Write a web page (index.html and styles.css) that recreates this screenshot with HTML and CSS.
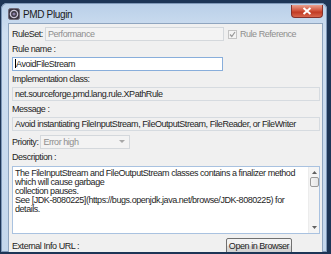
FILE: index.html
```html
<!DOCTYPE html>
<html lang="en">
<head>
    <meta charset="UTF-8">
    <title>PMD Plugin</title>
    <link rel="stylesheet" href="styles.css">
</head>
<body>
    <div class="window">
        <!-- Title Bar -->
        <div class="titlebar">
            <svg class="app-icon" width="12" height="12" viewBox="0 0 12 12">
                <rect x="0.5" y="0.5" width="11" height="11" rx="2" fill="#3a3440" stroke="#6f6a78"/>
                <circle cx="6" cy="6" r="3.6" fill="none" stroke="#c9c3d6" stroke-width="1.4"/>
                <circle cx="6" cy="6" r="1.6" fill="#8a7fa6"/>
            </svg>
            <span class="title">PMD Plugin</span>
            <div class="close-btn">
                <svg width="10" height="8" viewBox="0 0 10 8">
                    <path d="M1.5 1 L8.5 7 M8.5 1 L1.5 7" stroke="#fff" stroke-width="2"/>
                </svg>
            </div>
        </div>

        <!-- Dialog Body -->
        <div class="client">
            <div class="row">
                <span class="label">RuleSet:</span>
                <div class="field disabled ruleset">Performance</div>
                <span class="checkbox">
                    <svg width="9" height="9" viewBox="0 0 9 9">
                        <path d="M2 4.5 L3.8 6.5 L7 2" fill="none" stroke="#9a9a9a" stroke-width="1.2"/>
                    </svg>
                </span>
                <span class="label grey">Rule Reference</span>
            </div>

            <div class="label block">Rule name :</div>
            <div class="field focus name"><span class="caret"></span>AvoidFileStream</div>

            <div class="label block">Implementation class:</div>
            <div class="field readonly">net.sourceforge.pmd.lang.rule.XPathRule</div>

            <div class="label block">Message :</div>
            <div class="field readonly">Avoid instantiating FileInputStream, FileOutputStream, FileReader, or FileWriter</div>

            <div class="row priority">
                <span class="label">Priority:</span>
                <div class="field disabled combo">
                    <span>Error high</span>
                    <svg width="6" height="4" viewBox="0 0 6 4"><path d="M0 0 H6 L3 3 Z" fill="#a8a8a8"/></svg>
                </div>
            </div>

            <div class="label block">Description :</div>
            <div class="textarea">
                <div class="text">The FileInputStream and FileOutputStream classes contains a finalizer method<br>which will cause garbage<br>collection pauses.<br>See [JDK-8080225](https://bugs.openjdk.java.net/browse/JDK-8080225) for<br>details.</div>
                <div class="scrollbar">
                    <svg width="5" height="3" viewBox="0 0 5 3"><path d="M0 3 L2.5 0 L5 3 Z" fill="#606060"/></svg>
                    <div class="thumb"></div>
                    <div class="track"></div>
                    <svg width="5" height="3" viewBox="0 0 5 3"><path d="M0 0 L2.5 3 L5 0 Z" fill="#606060"/></svg>
                </div>
            </div>

            <div class="row bottom">
                <span class="label">External Info URL :</span>
                <button class="btn">Open in Browser</button>
            </div>
        </div>
    </div>
</body>
</html>
```

FILE: styles.css
```css
/* Page */
body {
    margin: 0;
    background: #1d3556;
    font-family: "Liberation Sans", Arial, sans-serif;
    font-size: 9px;
    letter-spacing: -0.45px;
    color: #1e1e1e;
    overflow: hidden;
    height: 254px;
}
/* Window Frame */
.window {
    margin: 3px 0 0 1px;
    width: 326px;
    height: 249px;
    overflow: hidden;
    box-sizing: border-box;
    padding: 0 4px 0 7px;
    background: linear-gradient(#b9cfe8, #cfdff1 30px, #c4d7ec);
    border-radius: 6px 6px 0 0;
    box-shadow: inset 0 0 0 1px #7f98b8;
}
.titlebar {
    height: 20px;
    display: flex;
    align-items: center;
    position: relative;
}
.app-icon {
    margin-top: 2px;
}
.title {
    margin-left: 3px;
    margin-top: 2px;
    font-size: 10px;
    letter-spacing: -0.35px;
    color: #1a1a1a;
}
.close-btn {
    position: absolute;
    right: 0;
    top: 2px;
    width: 30px;
    height: 12px;
    border: 1px solid #84302a;
    border-top: none;
    border-radius: 0 0 4px 4px;
    background: linear-gradient(#e9a08e, #d2563f 45%, #c13b24 60%, #d8664d);
    display: flex;
    justify-content: center;
    align-items: center;
}
/* Client Area */
.client {
    height: 240px;
    box-sizing: border-box;
    background: #f0f0f0;
    border: 1px solid #8fa5bf;
    padding: 3px 2px 0 3px;
    display: flex;
    flex-direction: column;
}
.row {
    display: flex;
    align-items: center;
}
.label {
    white-space: nowrap;
    line-height: 10px;
}
.label.block {
    height: 10px;
    margin: 3px 0;
}
.grey {
    color: #8e8e8e;
}
.field {
    height: 14px;
    box-sizing: border-box;
    border: 1px solid #d6dbe0;
    background: #f0f0f0;
    padding: 0 2px;
    line-height: 12px;
    white-space: nowrap;
    overflow: hidden;
}
.field.disabled {
    color: #8e8e8e;
    background: #f3f3f3;
    border-color: #d4d8dc;
}
.field.ruleset {
    margin-left: 2px;
    width: 179px;
}
.field.focus {
    background: #fff;
    border-color: #88aedb;
}
.field.name {
    width: 211px;
}
.caret {
    display: inline-block;
    width: 1px;
    height: 9px;
    background: #000;
    vertical-align: -1px;
}
.checkbox {
    width: 9px;
    height: 9px;
    box-sizing: border-box;
    border: 1px solid #c4c4c4;
    background: #f4f4f4;
    margin: 0 3px 0 4px;
    display: flex;
}
.checkbox svg {
    margin: -1px;
}
.priority {
    margin-top: 4px;
}
.field.combo {
    margin-left: 2px;
    width: 90px;
    display: flex;
    justify-content: space-between;
    align-items: center;
}
.field.combo svg {
    margin-right: 2px;
}
/* Description Box */
.textarea {
    margin-top: 1px;
    height: 68px;
    box-sizing: border-box;
    border: 1px solid #a9c2e0;
    background: #fff;
    display: flex;
}
.textarea .text {
    flex: 1;
    padding: 2px 2px;
    line-height: 9px;
    white-space: nowrap;
    overflow: hidden;
}
.scrollbar {
    width: 11px;
    background: #f4f4f4;
    border-left: 1px solid #ececec;
    display: flex;
    flex-direction: column;
    align-items: center;
    padding: 4px 0 4px;
    box-sizing: border-box;
}
.thumb {
    width: 9px;
    height: 10px;
    margin-top: 3px;
    box-sizing: border-box;
    border: 1px solid #9a9a9a;
    border-radius: 2px;
    background: linear-gradient(90deg, #f4f4f4, #e6e6e6);
}
.track {
    flex: 1;
}
.bottom {
    margin-top: 4px;
    justify-content: space-between;
    align-items: flex-start;
}
.bottom .label {
    margin-top: 3px;
}
.btn {
    font-family: inherit;
    font-size: 9px;
    letter-spacing: -0.45px;
    color: #1e1e1e;
    width: 66px;
    height: 16px;
    margin-right: 28px;
    padding: 0;
    border: 1px solid #707070;
    border-radius: 2px;
    background: linear-gradient(#f2f2f2 45%, #dddddd 50%, #cfcfcf);
}
```
